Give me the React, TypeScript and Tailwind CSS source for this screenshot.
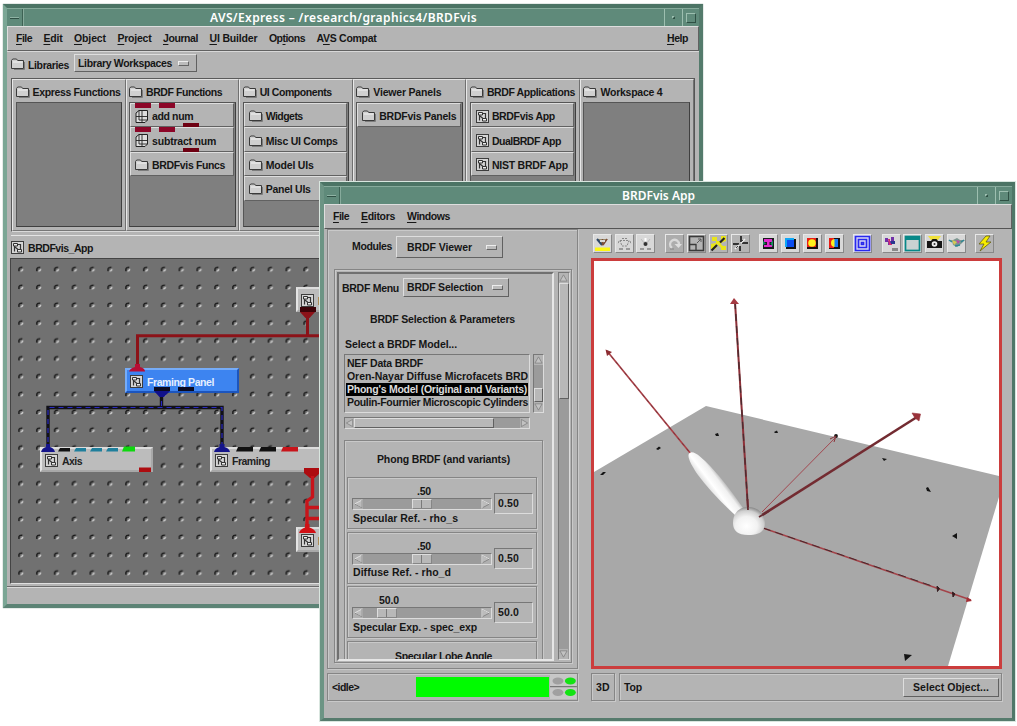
import React, { useLayoutEffect, useRef } from "react";

/* Bitmap-style label: letter spacing is adjusted so the text fills `w` pixels. */
function T({ w, children, className = "" }: { w: number; children: React.ReactNode; className?: string }) {
  const ref = useRef<HTMLSpanElement>(null);
  useLayoutEffect(() => {
    const el = ref.current;
    if (!el) return;
    el.style.letterSpacing = "0px";
    const natural = el.getBoundingClientRect().width;
    const n = (el.textContent || "").length;
    if (n > 0) el.style.letterSpacing = `${(w - natural) / n}px`;
  }, [w]);
  return (
    <span ref={ref} className={`inline-block whitespace-nowrap shrink-0 ${className}`}>
      {children}
    </span>
  );
}

const raised = "border border-t-[#dedede] border-l-[#dedede] border-b-[#616161] border-r-[#616161]";
const sunken = "border border-t-[#777] border-l-[#777] border-b-[#dcdcdc] border-r-[#dcdcdc]";
const etched = "border border-[#858585] shadow-[inset_1px_1px_0_#c9c9c9,1px_1px_0_#c9c9c9]";

const U = ({ children }: { children: string }) => (
  <span className="underline decoration-1 underline-offset-[2px]">{children}</span>
);

function Folder() {
  return (
    <svg width="14" height="12" viewBox="0 0 14 12" className="shrink-0">
      <path d="M.5 10.500V2.500L1.700 1H5.500L6.700 2.500H12.500V10.500Z" fill="#d0d0d0" stroke="#3a3a3a" strokeWidth="1" />
      <path d="M2 4H11.500" stroke="#f2f2f2" />
      <path d="M13.500 4V11.500H3" stroke="#7c7c7c" fill="none" />
    </svg>
  );
}

function AppIcon() {
  return (
    <svg width="13" height="13" viewBox="0 0 13 13" className="shrink-0">
      <rect x=".5" y=".5" width="12" height="12" fill="#d6d6d6" stroke="#3c3c3c" />
      <path d="M2.500 2.500H6.500V5H2.500Z" fill="#eee" stroke="#333" />
      <path d="M6.500 8.500H10.500V11H6.500Z" fill="#eee" stroke="#333" />
      <path d="M3.500 5V10.500M4 6L7 8.500M6.500 3.500H9.500V8" fill="none" stroke="#333" strokeWidth="1.200" />
    </svg>
  );
}

function GridIcon() {
  return (
    <svg width="14" height="13" viewBox="0 0 14 13" className="shrink-0">
      <path d="M4 .5H12.500V10L10 12.500H1V3Z" fill="#dedede" stroke="#222" />
      <path d="M7 1V12.500M1 6.500H12.500M4 .5V10H12.500" fill="none" stroke="#222" strokeWidth=".9" />
    </svg>
  );
}

function TitleBar({ title, w }: { title: string; w: number }) {
  return (
    <div className="flex h-[18px] shrink-0 items-stretch border-t border-[#87ab9c] bg-[#5f8a7a]">
      <div className="flex w-[16px] items-center justify-center border-r border-r-[#3d6254] shadow-[1px_0_0_#87ab9c]">
        <div className="h-[2px] w-[9px] border-t border-t-[#8fb3a4] bg-[#2f5044]" />
      </div>
      <div className="flex grow items-center justify-center font-['Noto_Sans'] text-[12px] font-semibold leading-none text-white">
        <T w={w}>{title}</T>
      </div>
      <div className="flex w-[18px] items-center justify-center border-l border-l-[#9dbfb0]">
        <div className="size-[3px] border border-l-[#9dbfb0] border-t-[#9dbfb0] border-b-[#2f5044] border-r-[#2f5044]" />
      </div>
      <div className="flex w-[17px] items-center justify-center border-l border-l-[#9dbfb0]">
        <div className="size-[10px] border border-l-[#9dbfb0] border-t-[#9dbfb0] border-b-[#2f5044] border-r-[#2f5044]" />
      </div>
    </div>
  );
}

function OptionMark() {
  return <div className="h-[5px] w-[11px] shrink-0 border border-l-[#ededed] border-t-[#ededed] border-b-[#666] border-r-[#666] bg-[#bcbcbc]" />;
}

type Item = { label: string; w: number; kind: "folder" | "app" | "func" };
type Column = { title: string; w: number; items: Item[] };

const columns: Column[] = [
  { title: "Express Functions", w: 88, items: [] },
  {
    title: "BRDF Functions", w: 76, items: [
      { label: "add num", w: 41, kind: "func" },
      { label: "subtract num", w: 64, kind: "func" },
      { label: "BRDFvis Funcs", w: 73, kind: "folder" },
    ],
  },
  {
    title: "UI Components", w: 72, items: [
      { label: "Widgets", w: 37, kind: "folder" },
      { label: "Misc UI Comps", w: 72, kind: "folder" },
      { label: "Model UIs", w: 48, kind: "folder" },
      { label: "Panel UIs", w: 45, kind: "folder" },
    ],
  },
  { title: "Viewer Panels", w: 68, items: [{ label: "BRDFvis Panels", w: 77, kind: "folder" }] },
  {
    title: "BRDF Applications", w: 88, items: [
      { label: "BRDFvis App", w: 63, kind: "app" },
      { label: "DualBRDF App", w: 69, kind: "app" },
      { label: "NIST BRDF App", w: 76, kind: "app" },
    ],
  },
  { title: "Workspace 4", w: 62, items: [] },
];

function PaletteColumn({ col }: { col: Column }) {
  return (
    <div className="flex w-[113.6px] shrink-0 flex-col border border-t-[#e2e2e2] border-l-[#e8e8e8] border-b-[#777] border-r-[#707070] px-[2.5px] pb-[3px]">
      <div className="flex h-[22px] shrink-0 items-center gap-[3px] pt-[2px]">
        <Folder />
        <T w={col.w} className="pt-px">{col.title}</T>
      </div>
      <div className="grow border border-t-[#555] border-l-[#555] border-b-[#3f3f3f] border-r-[#3f3f3f] bg-[#7f7f7f]">
        {col.items.map((it) => (
          <div key={it.label} className={`relative mr-[1px] flex h-[24.4px] items-center gap-[3px] bg-[#b4b4b4] pl-[4px] pt-[2px] ${raised}`}>
            {it.kind === "folder" ? <Folder /> : it.kind === "app" ? <AppIcon /> : <GridIcon />}
            <T w={it.w} className="pt-px">{it.label}</T>
            {it.kind === "func" && (
              <>
                <span className="absolute left-[4px] top-[-1px] h-[5px] w-[16px] bg-[#8c0628]" />
                <span className="absolute left-[28px] top-[-1px] h-[5px] w-[16px] bg-[#8c0628]" />
                <span className="absolute bottom-[-1px] left-[52px] h-[4px] w-[16px] bg-[#6e0012]" />
              </>
            )}
          </div>
        ))}
      </div>
    </div>
  );
}

function Node({ pos, label, w, tone }: { pos: string; label: string; w: number; tone?: "blue" }) {
  return (
    <div
      className={`absolute flex h-[25px] items-center gap-[4px] border-2 pl-[3px] pt-[2px] ${pos} ${
        tone === "blue"
          ? "border-t-[#76acf8] border-l-[#76acf8] border-b-[#1c55bd] border-r-[#1c55bd] bg-[#3d84f0] text-[#e6f0ff]"
          : "border-t-[#dcdcdc] border-l-[#e4e4e4] border-b-[#a8a8a8] border-r-[#a8a8a8] bg-[#bcbcbc] text-[#222]"
      }`}
    >
      <AppIcon />
      <T w={w} className="pt-px">{label}</T>
    </div>
  );
}

function Canvas() {
  return (
    <div className="relative h-[326px] shrink-0 overflow-hidden border border-t-[#444] border-l-[#444] border-b-[#e0e0e0] border-r-[#e0e0e0] bg-[#717171]">
      <svg className="absolute left-0 top-0" width="684" height="324" viewBox="11 259 684 324">
        <defs>
          <pattern id="pegs" x="12.2" y="260.3" width="17.82" height="17.85" patternUnits="userSpaceOnUse">
            <path d="M6.8 10.800V8.500Q7.200 6.900 10.200 7.200" fill="none" stroke="#1c1c1c" strokeWidth="1.500" />
            <path d="M8.400 10.800Q10.600 10.800 10.500 8.600" fill="none" stroke="#cfcfcf" strokeWidth="1.500" />
          </pattern>
        </defs>
        <rect x="11" y="259" width="684" height="324" fill="url(#pegs)" />
      </svg>
      <Node pos="left-[114px] top-[109px] w-[114px]" label="Framing Panel" w={67} tone="blue" />
      <Node pos="left-[29px] top-[188px] w-[113px]" label="Axis" w={20} />
      <Node pos="left-[199px] top-[188px] w-[140px]" label="Framing" w={38} />
      <Node pos="left-[285px] top-[28px] w-[100px]" label="Initialize" w={44} />
      <Node pos="left-[285px] top-[268px] w-[100px]" label="Information" w={54} />
      <svg className="absolute left-0 top-0" width="684" height="324" viewBox="11 259 684 324" fill="none">
        <path d="M307.5 315V335.8M340 335.8H137.5V366" stroke="#8c1218" strokeWidth="3" />
        <path d="M129 371.500Q130 368 135 367V364H140V367Q145 368 145 371.500Z" fill="#b80c34" />
        <rect x="300" y="307" width="16" height="5" fill="#3d0308" />
        <path d="M300 312H315L309.500 318H305.500Z" fill="#8c1218" />
        <path d="M161.500 392V408M48 451V407.500H222V451" stroke="#111118" strokeWidth="3.400" />
        <path d="M161.500 392V408M48 451V407.500H222V451" stroke="#2a2ac0" strokeWidth="1.200" strokeDasharray="5 4" />
        <path d="M154 388H170V391L164 397H159.500L154 391Z" fill="#10108a" />
        <rect x="154" y="387" width="16" height="4" fill="#0a0a20" />
        <rect x="178" y="387" width="16" height="4" fill="#0a0a20" />
        <path d="M41 452Q42 448 46 447V444H50V447Q54 448 55 452Z" fill="#14148a" />
        <path d="M214 452Q215 448 219.500 447V444H224.500V447Q229 448 230 452Z" fill="#14148a" />
        <path d="M60 448H70V451.500H58Z" fill="#111" />
        <path d="M76 448H86V451.500H74ZM92 448H102V451.500H90ZM108 448H118V451.500H106Z" fill="#1f7f9c" />
        <path d="M124 446.500H135V451.500H122Z" fill="#0dd80d" />
        <path d="M238 447H253V451.500H236ZM261 447H276V451.500H259Z" fill="#111" />
        <path d="M283 447H298V451.500H281Z" fill="#c8141a" />
        <path d="M139 467.500H151V472H139Z" fill="#ad0c10" />
        <path d="M304 468H320V473L314.500 478H310L304 473Z" fill="#ad0c10" />
        <path d="M312.500 476V497L307 501V528M307 507.500H340M307 518.500H340" stroke="#c8141a" strokeWidth="3.400" />
        <path d="M299 533Q300 529 305 527.500V524H309.500V527.500Q315 529 316 533Z" fill="#d01015" />
      </svg>
    </div>
  );
}

function ExpressWindow() {
  return (
    <div className="absolute left-[3px] top-[4px] flex h-[604px] w-[700px] flex-col border-[4px] border-t-[#4c7465] border-l-[#7ba695] border-b-[#5c8375] border-r-[#547b6c] bg-[#b4b4b4] shadow-[0_0_1px_#6a8a7c]">
      <TitleBar title="AVS/Express – /research/graphics4/BRDFvis" w={267} />
      <div className={`flex h-[25px] shrink-0 items-center gap-[11.500px] pl-[8px] pr-[10px] ${raised}`}>
        <T w={16}><U>F</U>ile</T>
        <T w={19}><U>E</U>dit</T>
        <T w={32}><U>O</U>bject</T>
        <T w={34}><U>P</U>roject</T>
        <T w={35}><U>J</U>ournal</T>
        <T w={48}><U>U</U>I Builder</T>
        <T w={36}>Op<U>t</U>ions</T>
        <T w={60}>A<U>V</U>S Compat</T>
        <T w={21} className="ml-auto"><U>H</U>elp</T>
      </div>
      <div className="flex h-[27px] shrink-0 items-start border-t border-[#d8d8d8] pl-[4px]">
        <div className="mt-[6px]"><Folder /></div>
        <T w={41} className="ml-[3px] mt-[7px]">Libraries</T>
        <div className={`ml-[5px] mt-[2px] flex h-[18px] w-[123px] items-center justify-between pl-[3px] pr-[7px] ${raised}`}>
          <T w={94}>Library Workspaces</T>
          <OptionMark />
        </div>
      </div>
      <div className="mx-[4px] flex h-[154px] w-[684px] shrink-0 border border-t-[#5a5a5a] border-l-[#5a5a5a] border-b-[#dadada] border-r-[#555]">
        {columns.map((c) => <PaletteColumn key={c.title} col={c} />)}
      </div>
      <div className="ml-[4px] mt-[3px] flex h-[23px] shrink-0 items-center gap-[4px] border-t border-[#e4e4e4] pt-px">
        <AppIcon />
        <T w={65} className="pt-px">BRDFvis_App</T>
      </div>
      <div className="ml-[3px] mr-[4px]"><Canvas /></div>
      <div className="mt-[2px] grow border-t border-[#6c6c6c] shadow-[inset_0_1px_0_#dadada]" />
    </div>
  );
}

function Slider({ value, label, lw, field, low }: { value: string; label: string; lw: number; field: string; low?: boolean }) {
  return (
    <div className={`mb-[2.500px] flex h-[52px] w-[190px] shrink-0 pl-[4px] pt-[7px] ${etched}`}>
      <div className="flex w-[140px] flex-col">
        <div className={`flex h-[13px] items-center ${low ? "pl-[27px]" : "pl-[65px]"}`}>
          <T w={low ? 20 : 14}>{value}</T>
        </div>
        <div className={`flex h-[12px] items-stretch bg-[#9b9b9b] ${sunken}`}>
          <svg width="10" height="10" viewBox="0 0 10 10" className="shrink-0 bg-[#b0b0b0]">
            <path d="M9 1L1.500 5L9 9Z" fill="#bcbcbc" stroke="#e0e0e0" /><path d="M1.500 5L9 9V1" fill="none" stroke="#888" />
          </svg>
          <div className={`flex w-[20px] border border-t-[#dedede] border-l-[#dedede] border-b-[#868686] border-r-[#868686] bg-[#b8b8b8] ${low ? "ml-[14px]" : "ml-[49px]"}`}>
            <div className="w-[9px] border-r border-[#7a7a7a]" />
          </div>
          <svg width="10" height="10" viewBox="0 0 10 10" className="ml-auto shrink-0 bg-[#b0b0b0]">
            <path d="M1 1L8.500 5L1 9Z" fill="#bcbcbc" stroke="#888" /><path d="M1 9V1L8.500 5" fill="none" stroke="#e0e0e0" />
          </svg>
        </div>
        <div className="flex h-[16px] items-center pl-[1px]"><T w={lw}>{label}</T></div>
      </div>
      <div className={`ml-[2px] mt-[8px] flex h-[21px] w-[39px] items-center pl-[3px] ${sunken}`}>
        <T w={21}>{field}</T>
      </div>
    </div>
  );
}

function Arrow({ dir }: { dir: "up" | "down" | "left" | "right" }) {
  const d = { up: "M1 8.500L5 1.500L9 8.500Z", down: "M1 1.500L5 8.500L9 1.500Z", left: "M8.500 1L1.500 5L8.500 9Z", right: "M1.500 1L8.500 5L1.500 9Z" }[dir];
  return (
    <svg width="9" height="10" viewBox="0 0 10 10" className="shrink-0 bg-[#b4b4b4]">
      <path d={d} fill="#c2c2c2" stroke="#828282" strokeWidth=".9" />
    </svg>
  );
}

function ModelList() {
  const rows: [string, number][] = [
    ["NEF Data BRDF", 76],
    ["Oren-Nayar Diffuse Microfacets BRD", 181],
    ["Phong's Model (Original and Variants)", 180],
    ["Poulin-Fournier Microscopic Cylinders", 181],
  ];
  return (
    <div className="ml-[5px] flex h-[59px] shrink-0 gap-[3px]">
      <div className={`w-[186px] overflow-hidden pl-[1px] pr-[1px] pt-[2px] ${sunken}`}>
        {rows.map(([r, w], i) => (
          <div key={r} className={`flex h-[13px] items-center pl-[1px] ${i === 2 ? "bg-black text-[#dcdcdc]" : ""}`}>
            <T w={w}>{r}</T>
          </div>
        ))}
      </div>
      <div className={`flex w-[11px] flex-col bg-[#9b9b9b] ${sunken}`}>
        <Arrow dir="up" />
        <div className={`mt-auto h-[14px] bg-[#b8b8b8] ${raised}`} />
        <Arrow dir="down" />
      </div>
    </div>
  );
}

function LeftPane() {
  return (
    <div className={`flex h-[440px] w-[251px] shrink-0 flex-col pl-[6px] ${etched}`}>
      <div className="flex h-[39px] shrink-0 items-start pl-[18px] pt-[6px]">
        <T w={40} className="mt-[4px]">Modules</T>
        <div className={`ml-[4px] flex h-[22px] w-[107px] items-center justify-between pl-[10px] pr-[5px] ${raised}`}>
          <T w={65}>BRDF Viewer</T>
          <OptionMark />
        </div>
      </div>
      <div className={`flex h-[394px] w-[238px] shrink-0 px-[2px] pt-[2px] ${etched}`}>
        <div className="flex h-[389px] w-[217px] shrink-0 flex-col overflow-hidden border-2 border-t-[#707070] border-l-[#707070] border-b-[#e6e6e6] border-r-[#e6e6e6]">
          <div className="flex h-[24px] shrink-0 items-start pl-[3px] pt-[4px]">
            <T w={57} className="mt-[4px]">BRDF Menu</T>
            <div className={`ml-[4px] flex h-[19px] w-[106px] items-center justify-between pl-[3px] pr-[5px] ${raised}`}>
              <T w={76}>BRDF Selection</T>
              <OptionMark />
            </div>
          </div>
          <div className="flex h-[43px] shrink-0 items-center pl-[31px]"><T w={145}>BRDF Selection &amp; Parameters</T></div>
          <div className="flex h-[13px] shrink-0 items-start pl-[6px]"><T w={112} className="-mt-[3px]">Select a BRDF Model...</T></div>
          <ModelList />
          <div className={`ml-[5px] mt-[4px] flex h-[12px] w-[186px] shrink-0 bg-[#9b9b9b] ${sunken}`}>
            <Arrow dir="left" />
            <div className={`w-[140px] bg-[#b8b8b8] ${raised}`} />
            <div className="ml-auto flex"><Arrow dir="right" /></div>
          </div>
          <div className={`ml-[5px] mt-[11px] flex h-[260px] w-[199px] shrink-0 flex-col pl-[2px] ${etched}`}>
            <div className="flex h-[36px] shrink-0 items-center pl-[30px]"><T w={133}>Phong BRDF (and variants)</T></div>
            <Slider value=".50" label="Specular Ref. - rho_s" lw={105} field="0.50" />
            <Slider value=".50" label="Diffuse Ref. - rho_d" lw={98} field="0.50" />
            <Slider value="50.0" label="Specular Exp. - spec_exp" lw={124} field="50.0" low />
            <div className={`flex h-[52px] w-[190px] shrink-0 items-start pl-[47px] pt-[8px] ${etched}`}>
              <T w={97}>Specular Lobe Angle</T>
            </div>
          </div>
        </div>
        <div className={`ml-[4px] flex h-[388px] w-[12px] shrink-0 flex-col bg-[#9b9b9b] ${sunken}`}>
          <Arrow dir="up" />
          <div className={`h-[116px] bg-[#b8b8b8] ${raised}`} />
          <div className="mt-auto flex"><Arrow dir="down" /></div>
        </div>
      </div>
    </div>
  );
}

const Tool = ({ children, className = "" }: { children: React.ReactNode; className?: string }) => (
  <div className={`size-[19px] shrink-0 border border-t-[#e8e8e8] border-l-[#e8e8e8] border-b-[#888] border-r-[#888] ${className}`}>
    <svg width="17" height="17" viewBox="0 0 17 17" fill="none">{children}</svg>
  </div>
);

function Toolbar() {
  const lit = "bg-[#d8d8d8]";
  return (
    <div className="flex h-[29px] shrink-0 pl-[2px] pt-[5px]">
      <div className="mr-[10px] flex gap-[2.700px]">
        <Tool className={lit}><path d="M3 4H14L8.500 11Z" fill="#9a8e6a" /><path d="M3 4L8 10" stroke="#2e4868" strokeWidth="2" /><path d="M8.500 4V10M13 4L9 10" stroke="#7c4b39" strokeWidth="1.400" /><path d="M6 6H11" stroke="#d8d8d8" strokeWidth="2" /><path d="M1 12.500H16V16H1Z" fill="#fdf815" /></Tool>
        <Tool className={lit}><path d="M4 5.500H13L11 11H6ZM6 3.500H11M3 6L2 9M14 6L15 9" stroke="#888" strokeDasharray="2 1" /><path d="M3 14H7M10 14H14" stroke="#999" strokeWidth="2" /></Tool>
        <Tool className={lit}><path d="M4 4L7 8M13 4L10 8" stroke="#bbb" /><circle cx="8.500" cy="9" r="2" fill="#333" /><path d="M8.500 3V6" stroke="#fff" strokeWidth="2" /><path d="M3 14H7M10 14H14" stroke="#999" strokeWidth="2" /></Tool>
      </div>
      <div className="mr-[9px] flex gap-[2.800px]">
        <Tool className="bg-[#adadad]"><path d="M6 13A4.500 4.500 0 1 1 13 9.500" stroke="#d9d9d9" strokeWidth="2.300" /><path d="M8.500 9H16L12.500 13Z" fill="#dedede" /><path d="M4 14H8" stroke="#888" /></Tool>
        <Tool className="bg-[#b4b4b4]"><rect x="1.500" y="1.500" width="14" height="14" stroke="#3a3a3a" strokeWidth="1.600" /><path d="M2 9.500H8V15" stroke="#3a3a3a" strokeWidth="1.300" /><path d="M9 8L13 4M10 4H13V7" stroke="#5a5a5a" /></Tool>
        <Tool className="bg-[#b4b4b4]"><path d="M2 2H7V6H11V1H16V6L11 8V11H16V15H11V11L6 9V14H1V9L6 8V6H2Z" fill="#e9e51a" /><path d="M1.500 15.500L7 10M10 7.500L14.500 3" stroke="#222" strokeWidth="2.200" /><path d="M9 9L13 13" stroke="#e9e51a" strokeWidth="2.500" /></Tool>
        <Tool className="bg-[#b4b4b4]"><path d="M9 1V7M1 9H7M10 8H16M8 11V16" stroke="#333" strokeWidth="2" /><path d="M13 4L9 8M7 10L3 14" stroke="#eee" strokeWidth="1.500" /><path d="M11 5L9 7M6 11L4 13" stroke="#444" /></Tool>
      </div>
      <div className="mr-[9px] flex gap-[3px]">
        <Tool className={lit}><path d="M3 3H14V14H3Z" fill="#171b1b" /><path d="M4 4H12V7H9.500V10H12V12H4V10H7V7H4Z" fill="#e02bce" /><path d="M3 6V10L6 8.500ZM13 5L10.500 8.500L13 12Z" fill="#178c61" /></Tool>
        <Tool className={lit}><path d="M4 4H14V14H4Z" fill="#111" /><path d="M3 3H12V12H3Z" fill="#0fa6f6" /><path d="M5 5H12V12H5Z" fill="#094cf0" /></Tool>
        <Tool className={lit}><path d="M3 3H14V14H3Z" fill="#181010" /><path d="M3 3H12V12H3Z" fill="#e91d16" /><circle cx="8" cy="8" r="3.800" fill="#fff11b" /></Tool>
        <Tool className={lit}><path d="M3 3H14V14H3Z" fill="#181010" /><path d="M3 3H8V13H3Z" fill="#e91d16" /><path d="M9 4A4 4 0 0 0 9 12Z" fill="#fff11b" /><path d="M8.500 4H12V12H8.500Z" fill="#177bf7" /></Tool>
      </div>
      <Tool className="mr-[10px] bg-[#d8d8f4]"><path d="M1.500 1.500H15.500V15.500H1.500ZM4.500 4.500H12.500V12.500H4.500ZM7.500 7.500H9.500V9.500H7.500Z" stroke="#2929ed" strokeWidth="1.700" /></Tool>
      <div className="mr-[9px] flex gap-[2.700px]">
        <Tool className={lit}><path d="M2 3H5V6H8V2H11V7H8V10H5V7H2Z" fill="#7130a8" /><path d="M5 4H7V8H9V10H6Z" fill="#d02b75" /><path d="M8 6H12V9H8Z" fill="#29388e" /><path d="M9 13H15V16H9Z" fill="#888" /></Tool>
        <Tool className={lit}><rect x="1.500" y="1.500" width="14" height="14" fill="#c9d2d2" stroke="#078888" strokeWidth="1.700" /><path d="M2 3.500H15" stroke="#078888" strokeWidth="3" /></Tool>
        <Tool className={lit}><path d="M2 1H15L12 5H5Z" fill="#f0e13a" /><path d="M1 6H5L6.500 4H10.500L12 6H16V13H1Z" fill="#161616" /><circle cx="8.500" cy="9" r="2.800" fill="#f0f0f0" /><circle cx="8.500" cy="9" r="1" fill="#333" /></Tool>
        <Tool className={lit}><path d="M0 5L4 6L5 10L9 12L13 9L17 5L12 5L9 3L5 5Z" fill="#7d9690" /><path d="M4 5L9 7L6 10Z" fill="#d9ca51" /><path d="M8 5L12 6L10 9Z" fill="#bd49a5" /><path d="M1 5L4 7M7 11L12 10M13 7L16 5" stroke="#2e8796" strokeWidth="1.500" /></Tool>
      </div>
      <Tool className="bg-[#b4b4b4]"><path d="M10 1L3 9H8L4 16L15 7H10L14 1Z" fill="#f8ee00" stroke="#625d15" strokeWidth=".8" /></Tool>
    </div>
  );
}

function Scene() {
  return (
    <div className="h-[411px] w-[411px] shrink-0 overflow-hidden border-[3px] border-[#cb3d3d] bg-white">
      <svg width="405" height="405" viewBox="594 262 405 405" fill="none">
        <defs>
          <linearGradient id="lobe" gradientUnits="userSpaceOnUse" x1="706" y1="492" x2="726" y2="477">
            <stop offset="0" stopColor="#d0d0d0" /><stop offset=".35" stopColor="#fff" /><stop offset=".65" stopColor="#f0f0f0" /><stop offset="1" stopColor="#777" />
          </linearGradient>
          <radialGradient id="ball" cx=".42" cy=".68" r=".68">
            <stop offset="0" stopColor="#fff" /><stop offset=".5" stopColor="#f2f2f2" /><stop offset=".8" stopColor="#cfcfcf" /><stop offset="1" stopColor="#8a8a8a" />
          </radialGradient>
        </defs>
        <path d="M706 407L999 477V498L948 667H594V473Z" fill="#a8a8a8" />
        <g fill="#141414">
          <path d="M600 476L603 473H606L603 476ZM656 450L659 447.500L661 449L658 451ZM715 435L718 434L719 437L716 437ZM774 433L777 431.500L778 434L775 434ZM882 459L887 460L884 462ZM926 489L928 488L931 493L927 492ZM952 537L957 534V540ZM904 655L912 656L905 662Z" />
          <circle cx="836" cy="437" r="1.900" />
        </g>
        <path d="M607 352L691 455" stroke="#ab4148" strokeWidth="1.700" />
        <path d="M607 352L691 455" stroke="#632e35" strokeWidth=".7" strokeDasharray="3 4" />
        <path d="M605.500 350.500L612 353L607 357Z" fill="#8c2c31" />
        <path d="M735 303L748 510" stroke="#8d3038" strokeWidth="2" />
        <path d="M735 303L748 510" stroke="#4a2c30" strokeWidth="1.300" strokeDasharray="7 5" />
        <path d="M734 299L739 305H730Z" fill="#a53a42" />
        <path d="M836 438L762 513" stroke="#a24850" strokeWidth="1" />
        <path d="M830 440L836 437L834 443" stroke="#8a333a" />
        <path d="M917 418L759 518" stroke="#732b31" strokeWidth="2.600" />
        <path d="M912 414L920.500 415L919 422L915 419Z" fill="#99333a" stroke="#99333a" strokeWidth=".6" />
        <path d="M763 529L971 601" stroke="#a44349" strokeWidth="1.500" />
        <path d="M763 529L935 588" stroke="#46292d" strokeWidth="1" strokeDasharray="8 5" />
        <path d="M937 587L939.500 589.500L937.500 592.500ZM952.500 593L955 595L953 598Z" fill="#351c1f" stroke="#351c1f" />
        <path d="M967 598L972 602L966 603Z" fill="#a52d34" />
        <path d="M689.500 454C694 451 702 459 711 468Q726 484 743 509L735 516Q712 495 698 476C692 467 686 457 689.500 454Z" fill="url(#lobe)" />
        <path d="M733 524C733 514 739 508 748 508C758 508 765 515 765 524C765 533 758 536 748 536C738 536 733 532 733 524Z" fill="url(#ball)" />
        <path d="M747.500 500L748 511M769 512L759 518" stroke="#652b31" strokeWidth="1.800" />
      </svg>
    </div>
  );
}

function ViewerWindow() {
  return (
    <div className="absolute left-[320px] top-[182px] flex h-[539px] w-[695px] flex-col border-t-[4px] border-l-[4px] border-b-[3px] border-r-[3px] border-t-[#4c7465] border-l-[#6c9484] border-b-[#567b6d] border-r-[#4f7768] bg-[#b4b4b4] shadow-[0_0_0_1px_#d9e6df]">
      <TitleBar title="BRDFvis App" w={73} />
      <div className="flex h-[25px] shrink-0 items-center gap-[12px] border border-t-[#dedede] border-l-[#dedede] border-b-[#555] border-r-[#616161] pl-[8px]">
        <T w={16}><U>F</U>ile</T>
        <T w={34}><U>E</U>ditors</T>
        <T w={43}><U>W</U>indows</T>
      </div>
      <div className="flex grow pl-[3px]">
        <div className="flex flex-col gap-[4px]">
          <LeftPane />
          <div className={`flex h-[28px] w-[251px] shrink-0 items-center pl-[4px] ${etched}`}>
            <T w={27}>&lt;idle&gt;</T>
            <div className="ml-[57px] h-[20px] w-[134px] bg-[#00fb00]" />
            <svg width="27" height="26" viewBox="0 0 27 26" className="ml-px">
              <path d="M0 1H27V12H0ZM0 14H27V25H0Z" fill="#c7c7c7" />
              <path d="M0 12.500H27" stroke="#777" />
              <g fill="#a0a0a0"><ellipse cx="8" cy="7" rx="5.500" ry="3.500" /><ellipse cx="8" cy="18.500" rx="5.500" ry="3.500" /></g>
              <g fill="#12e312"><ellipse cx="20.500" cy="7" rx="5.500" ry="3.500" /><ellipse cx="20.500" cy="18.500" rx="5.500" ry="3.500" /></g>
            </svg>
          </div>
        </div>
        <div className="ml-[13px] flex flex-col">
          <Toolbar />
          <Scene />
          <div className="mt-[4px] flex gap-[4px]">
            <div className={`flex h-[28px] w-[24px] items-center justify-center ${etched}`}><T w={14}>3D</T></div>
            <div className={`flex h-[28px] w-[383px] items-center justify-between pl-[4px] pr-[2px] ${etched}`}>
              <T w={18}>Top</T>
              <div className={`flex h-[19px] w-[96px] items-center justify-center ${raised}`}><T w={76}>Select Object...</T></div>
            </div>
          </div>
        </div>
      </div>
    </div>
  );
}

export default function App() {
  return (
    <main className="relative h-[726px] w-[1017px] overflow-hidden bg-white font-['Liberation_Sans',sans-serif] text-[10.500px] font-bold leading-[13px] text-[#161616]">
      <ExpressWindow />
      <ViewerWindow />
    </main>
  );
}
